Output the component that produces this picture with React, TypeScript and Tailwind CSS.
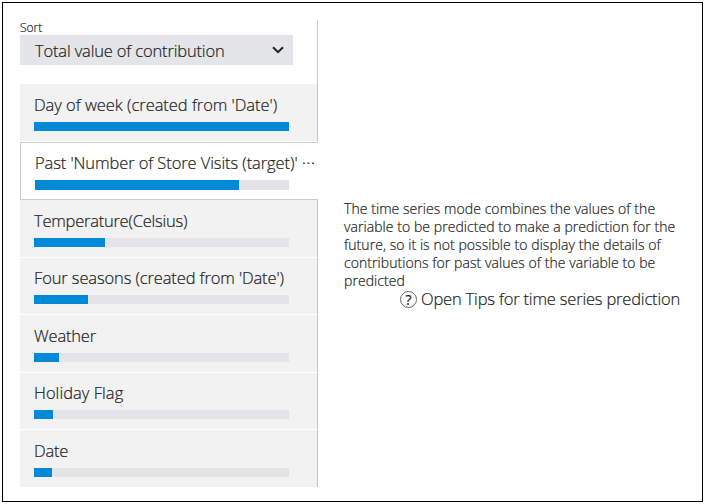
import React from 'react';

type Item = {
  label: string;
  text: string;
  row: string;
  fill: string;
  selected?: boolean;
};

const items: Item[] = [
  { label: "Day of week (created from 'Date')", text: 'tracking-[-0.04px]', row: 'h-[58px] border-b pt-[10px]', fill: 'w-[255px]' },
  { label: "Past 'Number of Store Visits (target)'", text: 'tracking-[-0.09px]', row: 'h-[58px] pt-[9px]', fill: 'w-[204px]', selected: true },
  { label: 'Temperature(Celsius)', text: 'tracking-[-0.24px]', row: 'h-[58px] border-b pt-[10px]', fill: 'w-[71px]' },
  { label: "Four seasons (created from 'Date')", text: 'tracking-[-0.12px]', row: 'h-[57px] border-b pt-[9px]', fill: 'w-[54px]' },
  { label: 'Weather', text: 'tracking-[-0.2px]', row: 'h-[58px] border-b pt-[10px]', fill: 'w-[25px]' },
  { label: 'Holiday Flag', text: 'tracking-[0.04px]', row: 'h-[57px] border-b pt-[9px]', fill: 'w-[19px]' },
  { label: 'Date', text: 'tracking-[-0.2px]', row: 'h-[57px] pt-[10px]', fill: 'w-[18px]' },
];

function Row({ item }: { item: Item }) {
  const look = item.selected
    ? 'border-y border-l border-y-[#ccc] border-l-[#ccc] bg-white'
    : 'border-r border-b-white border-r-[#c4c4c4] bg-[#f2f2f2]';
  return (
    <li className={`w-[298px] pl-[14px] ${item.row} ${look}`}>
      <div className="flex h-[28px] items-start whitespace-nowrap leading-[21px]">
        <span className={item.text}>{item.label}</span>
        {item.selected && (
          <svg className="ml-[6px] mt-[10px] shrink-0" width="11" height="3" viewBox="0 0 11 3" fill="#555">
            <rect x="0" y="0.5" width="2" height="1.5" />
            <rect x="4.5" y="0.5" width="2" height="1.5" />
            <rect x="9" y="0.5" width="2" height="1.5" />
          </svg>
        )}
      </div>
      <div className={`bg-[#e4e4e6] ${item.selected ? 'h-[10px] w-[254px]' : 'h-[9px] w-[255px]'}`}>
        <div className={`h-full bg-[#0089d7] ${item.fill}`} />
      </div>
    </li>
  );
}

export default function App() {
  return (
    <div className="h-[504px] w-[705px] bg-white p-[2px] font-['Open_Sans','Noto_Sans',sans-serif] text-[16.5px] font-light text-[#222] [-webkit-text-stroke:0.2px_#222]">
      <div className="flex h-[500px] w-[701px] border border-black pl-[17px] pt-[17px]">
        <aside className="w-[298px] shrink-0">
          <div className="h-[64px] border-r border-[#ccc]">
            <div className="h-[15px] text-[12px] leading-[15px]">Sort</div>
            <div className="flex h-[30px] w-[273px] items-center justify-between bg-[#e4e5e9] pl-[15px] pr-[9px]">
              <span className="whitespace-nowrap pt-[2px] leading-[28px] tracking-[-0.16px]">Total value of contribution</span>
              <svg width="12" height="8" viewBox="0 0 12 8" fill="none" stroke="#222" strokeWidth="2">
                <path d="M1 1.2 6 6.2 11 1.2" />
              </svg>
            </div>
          </div>
          <ul>
            {items.map((item) => (
              <Row key={item.label} item={item} />
            ))}
          </ul>
        </aside>
        <main className="ml-[26px] w-[337px] pt-[180px]">
          <p className="whitespace-nowrap text-[14px] leading-[18px] tracking-[0.06px]">
            The time series mode combines the values of the<br />
            variable to be predicted to make a prediction for the<br />
            future, so it is not possible to display the details of<br />
            contributions for past values of the variable to be<br />
            predicted
          </p>
          <div className="flex h-[19px] items-center pl-[56px]">
            <span className="flex size-[17px] shrink-0 items-center justify-center rounded-full border-[1.5px] border-[#666] text-[14px] font-normal">?</span>
            <span className="ml-[4px] whitespace-nowrap tracking-[-0.18px]">Open Tips for time series prediction</span>
          </div>
        </main>
      </div>
    </div>
  );
}
